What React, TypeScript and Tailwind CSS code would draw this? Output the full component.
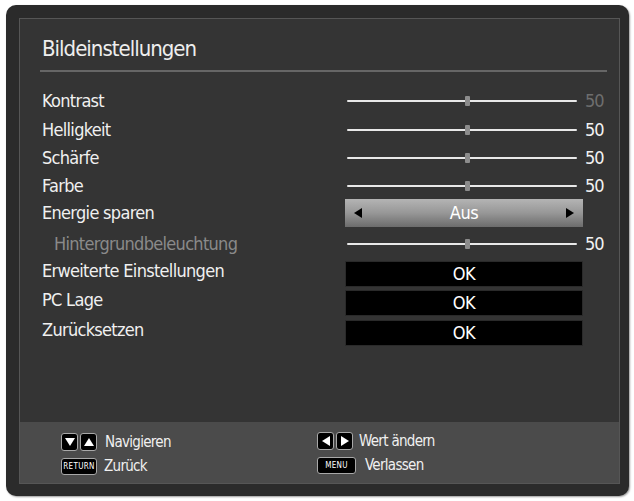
import React from "react";

const font = {
	fontFamily: '"Liberation Sans Narrow", "DejaVu Sans Condensed", "DejaVu Sans", sans-serif',
};

type Row =
	| { kind: "slider"; label: string; value: number; dim?: boolean; sub?: boolean; h: string }
	| { kind: "select"; label: string; value: string; h: string }
	| { kind: "ok"; label: string; h: string };

const rows: Row[] = [
	{ kind: "slider", label: "Kontrast", value: 50, dim: true, h: "h-[28px]" },
	{ kind: "slider", label: "Helligkeit", value: 50, h: "h-[29px]" },
	{ kind: "slider", label: "Schärfe", value: 50, h: "h-[28px]" },
	{ kind: "slider", label: "Farbe", value: 50, h: "h-[27px]" },
	{ kind: "select", label: "Energie sparen", value: "Aus", h: "h-[28px]" },
	{ kind: "slider", label: "Hintergrundbeleuchtung", value: 50, sub: true, h: "h-[34px]" },
	{ kind: "ok", label: "Erweiterte Einstellungen", h: "h-[29px]" },
	{ kind: "ok", label: "PC Lage", h: "h-[30px]" },
	{ kind: "ok", label: "Zurücksetzen", h: "h-[30px]" },
];

function Slider({ value, dim }: { value: number; dim?: boolean }) {
	return (
		<div className="flex items-center">
			<div className="relative ml-[2px] h-[2px] w-[230px] rounded-full bg-[#e8e8e8]">
				<div className="absolute left-[118px] top-[-4px] h-[10px] w-[5px] rounded-[1px] bg-[#8c8c8c]" />
			</div>
			<span
				className={`ml-[8px] text-[18px] leading-none tracking-[-1px] ${dim ? "text-[#6e6e6e]" : "text-[#f2f2f2]"}`}
			>
				{value}
			</span>
		</div>
	);
}

function Select({ value }: { value: string }) {
	return (
		<div className="flex h-[28px] w-[238px] items-center justify-between bg-linear-to-b from-[#b4b4b4] via-[#979797] to-[#6c6c6c] px-[9px]">
			<span className="h-0 w-0 border-y-[5px] border-r-[8px] border-y-transparent border-r-black" />
			<span className="text-[18px] leading-none tracking-[-0.5px] text-white">{value}</span>
			<span className="h-0 w-0 border-y-[5px] border-l-[8px] border-y-transparent border-l-black" />
		</div>
	);
}

function OkBox() {
	return (
		<div className="flex h-[26px] w-[238px] items-center justify-center border border-[#2a2a2a] bg-black text-[18px] leading-none tracking-[-0.5px] text-white">
			OK
		</div>
	);
}

function Key({ dir }: { dir: "up" | "down" | "left" | "right" }) {
	const tri = {
		up: "border-x-[5px] border-b-[8px] border-x-transparent border-b-white",
		down: "border-x-[5px] border-t-[8px] border-x-transparent border-t-white",
		left: "border-y-[5px] border-r-[8px] border-y-transparent border-r-white",
		right: "border-y-[5px] border-l-[8px] border-y-transparent border-l-white",
	}[dir];
	return (
		<span className="flex h-[18px] w-[17px] items-center justify-center rounded-[3px] border border-[#a8a8a8] bg-black">
			<span className={`h-0 w-0 ${tri}`} />
		</span>
	);
}

function Badge({ text, w }: { text: string; w: string }) {
	return (
		<span
			className={`flex h-[17px] ${w} items-center justify-center rounded-[3px] border border-[#a8a8a8] bg-black text-[8px] leading-none tracking-[0.3px] text-white`}
		>
			{text}
		</span>
	);
}

export default function App() {
	return (
		<div className="h-[501px] w-[634px] overflow-hidden bg-white pl-[6px] pt-[5px]" style={font}>
			<div className="h-[491px] w-[623px] rounded-[10px] bg-[#2b2b2b] px-[13px] pt-[13px] pb-[12px] shadow-[1px_1px_2px_rgba(0,0,0,0.4)]">
				<div className="flex h-[466px] w-[601px] flex-col border border-[#565656]">
					<div className="h-[403px] bg-[#343434] pl-[20px] pr-[12px] pt-[17px]">
						<div className="border-b-2 border-[#666] pb-[8px] pl-[2px] text-[22px] leading-[26px] tracking-[-1px] text-[#eeeeee]">
							Bildeinstellungen
						</div>
						<div className="mt-[15px] flex flex-col pl-[2px]">
							{rows.map((r) => (
								<div
									key={r.label}
									className={`flex ${r.h} ${r.kind === "ok" ? "items-start" : "items-center"}`}
								>
									<div
										className={`w-[303px] text-[18px] leading-[20px] tracking-[-0.7px] ${
											r.kind === "slider" && r.sub
												? "pl-[12px] text-[#8a8a8a]"
												: "text-[#f0f0f0]"
										}`}
									>
										{r.label}
									</div>
									{r.kind === "slider" && <Slider value={r.value} dim={r.dim} />}
									{r.kind === "select" && <Select value={r.value} />}
									{r.kind === "ok" && <OkBox />}
								</div>
							))}
						</div>
					</div>
					<div className="flex flex-1 bg-[#4b4b4b] pt-[11px] text-[15px] leading-none tracking-[-0.7px] text-[#f0f0f0]">
						<div className="ml-[41px] flex w-[256px] flex-col gap-[7px]">
							<div className="flex items-center gap-[2px]">
								<Key dir="down" />
								<Key dir="up" />
								<span className="ml-[6px]">Navigieren</span>
							</div>
							<div className="flex items-center">
								<Badge text="RETURN" w="w-[36px]" />
								<span className="ml-[7px]">Zurück</span>
							</div>
						</div>
						<div className="flex flex-col gap-[7px]">
							<div className="-mt-[1px] flex items-center gap-[2px]">
								<Key dir="left" />
								<Key dir="right" />
								<span className="ml-[4px]">Wert ändern</span>
							</div>
							<div className="flex items-center">
								<Badge text="MENU" w="w-[39px]" />
								<span className="ml-[9px]">Verlassen</span>
							</div>
						</div>
					</div>
				</div>
			</div>
		</div>
	);
}
